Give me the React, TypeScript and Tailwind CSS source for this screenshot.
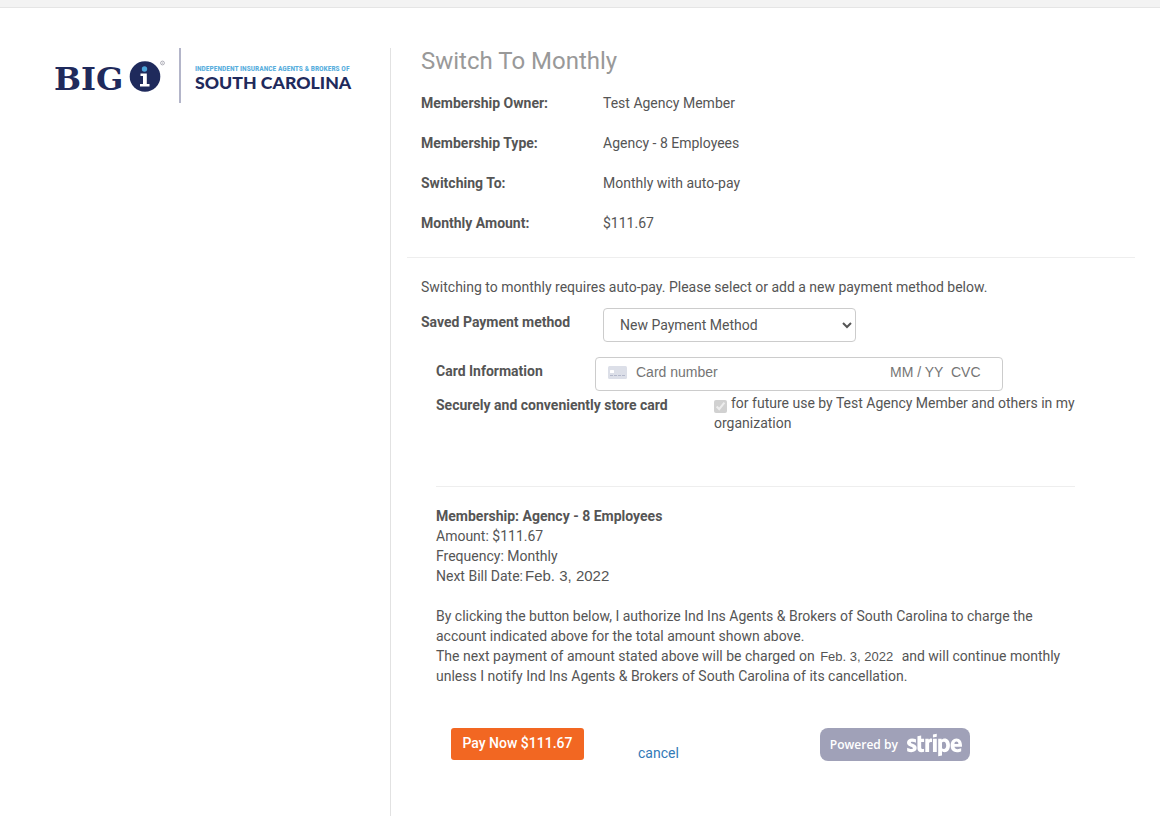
import React from "react";
import { FaStripe } from "react-icons/fa";

const details = [
  { label: "Membership Owner:", value: "Test Agency Member" },
  { label: "Membership Type:", value: "Agency - 8 Employees" },
  { label: "Switching To:", value: "Monthly with auto-pay" },
  { label: "Monthly Amount:", value: "$111.67" },
];

function AssociationLogo() {
  return (
    <svg viewBox="0 0 300 58" className="block h-[58px] w-[300px]" role="img" aria-label="Big I South Carolina">
      <text x="0" y="42" fontSize="32" fontWeight="700" fill="#1f2a5c" className="font-['DejaVu_Serif']">BIG</text>
      <circle cx="91" cy="28.500" r="15.300" fill="#1f2a5c" />
      <circle cx="90.500" cy="21" r="2.700" fill="#4da6db" />
      <path d="M86.500 25.500h6.300v10.500h2.700v2.500h-9.500v-2.500h3v-8h-2.500z" fill="#fff" />
      <circle cx="108.500" cy="15" r="1.900" fill="none" stroke="#9a9aa6" strokeWidth="0.800" />
      <circle cx="108.500" cy="15" r="0.600" fill="#9a9aa6" />
      <rect x="125" y="0" width="2" height="55" fill="#b3b5c9" />
      <text x="141" y="23" fontSize="7.500" fontWeight="700" fill="#58aedd" className="font-['Roboto_Condensed','Liberation_Sans_Narrow',Roboto,sans-serif]">
        INDEPENDENT INSURANCE AGENTS &amp; BROKERS OF
      </text>
      <text x="141" y="41" fontSize="17.700" fontWeight="900" fill="#1f2a5c" className="font-[Lato,sans-serif]">SOUTH CAROLINA</text>
    </svg>
  );
}

function CardIcon() {
  return (
    <svg viewBox="0 0 19 13" className="h-[13px] w-[19px] shrink-0" aria-hidden="true">
      <rect width="19" height="13" rx="1.500" fill="#dcdfe8" />
      <rect x="2" y="4" width="4" height="3" rx="0.500" fill="#fff" />
      <path d="M2 9.500h15" stroke="#b4b9cb" strokeWidth="1" strokeDasharray="3 1" />
    </svg>
  );
}

export default function App() {
  return (
    <div className="flex min-h-screen flex-col bg-white font-[Roboto,sans-serif] text-sm leading-5 text-[#555]">
      <header className="h-2 border-b border-[#e5e5e5] bg-[#f3f3f3]" />
      <div className="flex flex-1 pt-10">
        <aside className="w-[390px] shrink-0 pl-[54px]">
          <AssociationLogo />
        </aside>

        <main className="min-w-0 flex-1 border-l border-[#e2e2e2] pr-[25px] pl-4">
          <section className="border-b border-[#eee] pb-1 pl-3.5">
            <h1 className="mb-2 pt-px text-2xl leading-6 text-[#999]">Switch To Monthly</h1>
            <dl className="pt-3">
              {details.map((d) => (
                <div key={d.label} className="flex pb-5">
                  <dt className="w-[182px] font-bold">{d.label}</dt>
                  <dd>{d.value}</dd>
                </div>
              ))}
            </dl>
          </section>

          <form className="pt-[19px] pl-3.5" onSubmit={(e) => e.preventDefault()}>
            <p>Switching to monthly requires auto-pay. Please select or add a new payment method below.</p>
            <div className="mt-[11px] flex">
              <label htmlFor="saved-method" className="w-[182px] pt-1 font-bold">Saved Payment method</label>
              <select id="saved-method" className="h-[34px] w-[253px] rounded border border-[#ccc] bg-white px-3 text-[#555]">
                <option>New Payment Method</option>
              </select>
            </div>

            <div className="mt-[15px] mr-[60px] ml-[15px]">
              <div className="flex">
                <label htmlFor="card-number" className="w-[159px] pt-1 font-bold">Card Information</label>
                <div className="flex h-[34px] w-[408px] items-center rounded border border-[#ccc] px-3 pb-1 font-['Liberation_Sans',sans-serif]">
                  <CardIcon />
                  <input id="card-number" placeholder="Card number" className="ml-[9px] min-w-0 flex-1 outline-none placeholder:text-[#757575]" />
                  <input aria-label="Expiry date" placeholder="MM / YY" className="w-[61px] outline-none placeholder:text-[#757575]" />
                  <input aria-label="CVC" placeholder="CVC" className="w-[39px] outline-none placeholder:text-[#757575]" />
                </div>
              </div>
              <div className="mt-0.5 flex">
                <label htmlFor="store-card" className="w-[278px] shrink-0 pt-0.5 font-bold">Securely and conveniently store card</label>
                <p>
                  <input id="store-card" type="checkbox" checked disabled readOnly className="mr-1 size-[13px] align-[-5px]" />
                  for future use by Test Agency Member and others in my organization
                </p>
              </div>

              <hr className="mt-[53px] border-[#eee]" />

              <div className="mt-[19px]">
                <p className="font-bold">Membership: Agency - 8 Employees</p>
                <p>Amount: $111.67</p>
                <p>Frequency: Monthly</p>
                <p>
                  Next Bill Date:
                  <span className="ml-0.5 font-['Liberation_Sans',sans-serif] text-[15px] leading-4">Feb. 3, 2022</span>
                </p>
              </div>

              <p className="mt-5">
                By clicking the button below, I authorize Ind Ins Agents &amp; Brokers of South Carolina to charge the account indicated above for the total amount shown above.
                <br />
                The next payment of amount stated above will be charged on{" "}
                <span className="mr-[5px] ml-0.5 font-['Liberation_Sans',sans-serif] text-[13px] leading-4">Feb. 3, 2022</span>{" "}
                and will continue monthly unless I notify Ind Ins Agents &amp; Brokers of South Carolina of its cancellation.
              </p>

              <div className="mt-[42px] ml-[15px] flex items-start">
                <button type="submit" className="h-8 w-[133px] rounded-[3px] bg-[#f26722] pb-0.5 font-medium text-white">Pay Now $111.67</button>
                <a href="#cancel" className="ml-[54px] pt-[15px] text-[#337ab7]">cancel</a>
                <a href="#stripe" className="ml-[141px] flex h-[33px] w-[150px] items-center justify-between rounded-lg bg-[#a0a1b8] pr-2 pl-2.5 font-['Open_Sans',sans-serif] text-white">
                  <span className="text-xs font-semibold">Powered by</span>
                  <FaStripe className="h-11 w-[55px] shrink-0" aria-label="stripe" />
                </a>
              </div>
            </div>
          </form>
        </main>
      </div>
    </div>
  );
}
